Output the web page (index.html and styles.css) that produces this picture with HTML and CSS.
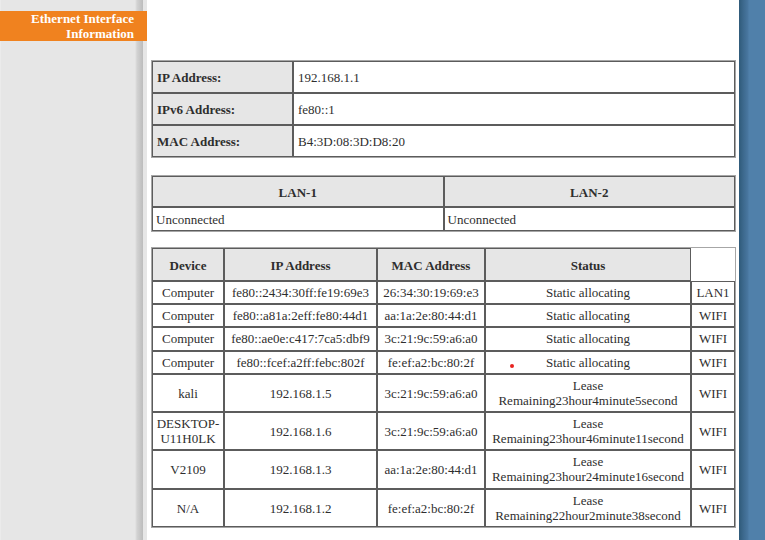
FILE: index.html
```html
<!DOCTYPE html>
<html>
<head>
<meta charset="utf-8">
<title>Ethernet Interface Information</title>
<link rel="stylesheet" href="styles.css">
</head>
<body>
<div class="page">
  <aside class="sidebar">
    <div class="menu-active">Ethernet Interface<br>Information</div>
  </aside>
  <main class="content">
    <table class="grid info">
      <colgroup><col class="c-label"><col class="c-value"></colgroup>
      <tr><th class="label">IP Address:</th><td class="value">192.168.1.1</td></tr>
      <tr><th class="label">IPv6 Address:</th><td class="value">fe80::1</td></tr>
      <tr><th class="label">MAC Address:</th><td class="value">B4:3D:08:3D:D8:20</td></tr>
    </table>

    <table class="grid lan">
      <colgroup><col class="c-half"><col class="c-half"></colgroup>
      <tr><th class="lan-head">LAN-1</th><th class="lan-head">LAN-2</th></tr>
      <tr><td class="lan-cell">Unconnected</td><td class="lan-cell">Unconnected</td></tr>
    </table>

    <table class="grid devices">
      <colgroup>
        <col class="c-dev"><col class="c-ip"><col class="c-mac"><col class="c-status"><col class="c-port">
      </colgroup>
      <tr><th class="dev-head">Device</th><th class="dev-head">IP Address</th><th class="dev-head">MAC Address</th><th class="dev-head">Status</th></tr>
      <tr><td>Computer</td><td>fe80::2434:30ff:fe19:69e3</td><td>26:34:30:19:69:e3</td><td>Static allocating</td><td>LAN1</td></tr>
      <tr><td>Computer</td><td>fe80::a81a:2eff:fe80:44d1</td><td>aa:1a:2e:80:44:d1</td><td>Static allocating</td><td>WIFI</td></tr>
      <tr class="tall"><td>Computer</td><td>fe80::ae0e:c417:7ca5:dbf9</td><td>3c:21:9c:59:a6:a0</td><td>Static allocating</td><td>WIFI</td></tr>
      <tr><td>Computer</td><td>fe80::fcef:a2ff:febc:802f</td><td>fe:ef:a2:bc:80:2f</td><td>Static allocating</td><td>WIFI</td></tr>
      <tr><td>kali</td><td>192.168.1.5</td><td>3c:21:9c:59:a6:a0</td><td>Lease Remaining23hour4minute5second</td><td>WIFI</td></tr>
      <tr><td>DESKTOP-U11H0LK</td><td>192.168.1.6</td><td>3c:21:9c:59:a6:a0</td><td>Lease Remaining23hour46minute11second</td><td>WIFI</td></tr>
      <tr class="tall"><td>V2109</td><td>192.168.1.3</td><td>aa:1a:2e:80:44:d1</td><td>Lease Remaining23hour24minute16second</td><td>WIFI</td></tr>
      <tr><td>N/A</td><td>192.168.1.2</td><td>fe:ef:a2:bc:80:2f</td><td>Lease Remaining22hour2minute38second</td><td>WIFI</td></tr>
    </table>
  </main>
  <div class="rightbar"></div>
  <span class="pointer-dot"></span>
</div>
</body>
</html>
```

FILE: styles.css
```css
html, body {
  margin: 0;
  padding: 0;
}

body {
  font-family: "Liberation Serif", "Times New Roman", serif;
  font-size: 13px;
  line-height: 15px;
  color: #2e2e2e;
  background: #fff;
}

.page {
  display: flex;
  height: 540px;
  overflow: hidden;
  position: relative;
}

.sidebar {
  width: 147px;
  flex: none;
  box-sizing: border-box;
  padding-top: 11px;
  background: linear-gradient(to right,
    #f0f0f0 0, #e6e6e6 1px, #e6e6e6 135px,
    #d2d2d2 137px, #bcbcbc 143px,
    #e6e6e6 143px, #e6e6e6 147px);
}

.menu-active {
  background: #f0821f;
  color: #fff;
  font-weight: bold;
  text-align: right;
  padding-right: 13px;
  height: 30px;
  line-height: 15px;
}

.content {
  flex: 1;
  padding: 60px 0 0 4px;
  display: flex;
  flex-direction: column;
  align-items: flex-start;
}

.rightbar {
  width: 26px;
  flex: none;
  background: linear-gradient(to right, #2f5a79 0, #3c688c 4px, #4977a0 9px, #5080aa 10px, #5080aa 26px);
}

.grid {
  width: 585px;
  table-layout: fixed;
  border-collapse: separate;
  border-spacing: 0;
  border: 1px solid #a6a6a6;
}

.grid th,
.grid td {
  box-sizing: border-box;
  border: 1px solid #5c5c5c;
  font-size: 13px;
  line-height: 15px;
}

.grid th {
  background: #e6e6e6;
  font-weight: bold;
}

/* info table */
.info { margin-bottom: 17px; }
.c-label { width: 141px; }
.c-value { width: 442px; }

.label {
  text-align: left;
  padding: 8px 4px 7px 4px;
}

.value {
  text-align: left;
  padding: 8px 4px 7px 4px;
}

/* LAN table */
.lan { margin-bottom: 15px; }
.c-half { width: 50%; }

.lan-head {
  text-align: center;
  padding: 8px 3px 6px 3px;
}

.lan-cell {
  text-align: left;
  padding: 4px 3px 3px 3px;
}

/* devices table */
.c-dev { width: 72px; }
.c-ip { width: 153px; }
.c-mac { width: 108px; }
.c-status { width: 206px; }
.c-port { width: 44px; }

.dev-head {
  text-align: center;
  padding: 9px 2px 7px 2px;
}

.devices td {
  text-align: center;
  padding: 3px 2px;
}

.devices .tall td {
  padding-bottom: 4px;
}

.pointer-dot {
  position: absolute;
  left: 510px;
  top: 364px;
  width: 4px;
  height: 4px;
  border-radius: 50%;
  background: #e8231f;
}
```
